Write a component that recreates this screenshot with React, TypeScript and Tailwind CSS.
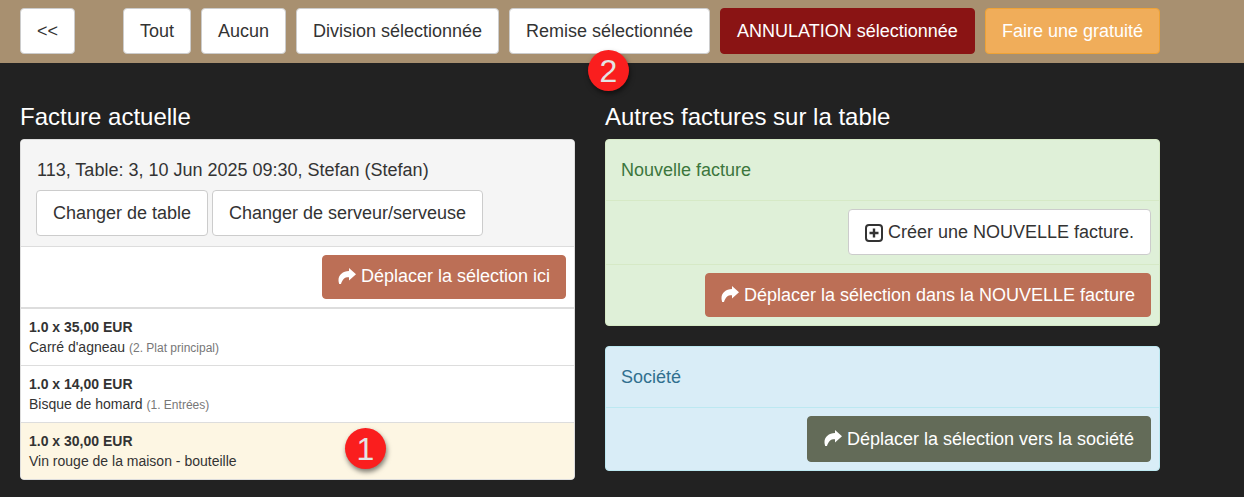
const whiteBtn = 'h-[46px] rounded border border-[#ccc] bg-white text-[18px] text-[#333] flex items-center justify-center';

function ShareIcon() {
  return (
    <svg viewBox="0 0 18 16" className="w-[18px] h-[16px] shrink-0 -mt-0.5" fill="currentColor">
      <path d="M11 0 L18 6.2 L11 12.4 V9.2 C7 9 4.6 10.8 3 16 L1.2 16 C-1.4 9 3.4 3.2 11 3 Z" />
    </svg>
  );
}

function PlusIcon() {
  return (
    <svg viewBox="0 0 18 18" className="w-[18px] h-[18px] shrink-0" fill="none" stroke="currentColor">
      <rect x="1" y="1" width="16" height="16" rx="3" strokeWidth="2" />
      <path d="M9 4.5 V13.5 M4.5 9 H13.5" strokeWidth="2.4" />
    </svg>
  );
}

function ShareButton({ label, className }: { label: string; className: string }) {
  return (
    <button className={`rounded border flex items-center justify-center gap-[5px] text-[18px] text-white ${className}`}>
      <ShareIcon />
      {label}
    </button>
  );
}

function Item({ price, name, course, selected }: { price: string; name: string; course?: string; selected?: boolean }) {
  return (
    <div className={`h-[57px] px-2 pt-2 border-t border-[#ddd] text-[14px] leading-[20px] text-[#333] ${selected ? 'bg-[#fdf6e3]' : 'bg-white'}`}>
      <div className="font-bold">{price}</div>
      <div>
        {name} {course && <span className="text-[12px] text-[#777]">{course}</span>}
      </div>
    </div>
  );
}

function Marker({ n, className }: { n: number; className: string }) {
  return (
    <div className={`absolute w-[41px] h-[41px] rounded-full bg-[#fa1e1e] text-[#e4e4e4] text-[32px] flex items-center justify-center shadow-[1px_3px_5px_rgba(0,0,0,0.5)] ${className}`}>
      {n}
    </div>
  );
}

export default function App() {
  return (
    <div className="relative min-h-[497px] bg-[#222] font-['Liberation_Sans',Arial,sans-serif]">
      <div className="h-[63px] bg-[#a89070] pl-5 pt-2 flex items-start">
        <button className={`${whiteBtn} w-[55px] mr-[48px]`}>&lt;&lt;</button>
        <div className="flex gap-[10px]">
          <button className={`${whiteBtn} w-[68px]`}>Tout</button>
          <button className={`${whiteBtn} w-[85px]`}>Aucun</button>
          <button className={`${whiteBtn} w-[203px]`}>Division sélectionnée</button>
          <button className={`${whiteBtn} w-[201px]`}>Remise sélectionnée</button>
          <button className="h-[46px] w-[255px] rounded border border-[#8a1414] bg-[#8a1414] text-[18px] text-white">ANNULATION sélectionnée</button>
          <button className="h-[46px] w-[175px] rounded border border-[#eea236] bg-[#f0ad5a] text-[18px] text-white">Faire une gratuité</button>
        </div>
      </div>

      <div className="w-[1180px] px-5 pt-[39px] grid grid-cols-2 gap-[30px]">
        <div>
          <h2 className="text-[24px] leading-[30px] text-white mb-[7px]">Facture actuelle</h2>
          <div className="rounded border border-[#ddd] bg-white overflow-hidden">
            <div className="h-[106px] bg-[#f5f5f5] px-[15px] pt-[19px]">
              <div className="pl-px text-[18px] leading-[23px] text-[#333]">113, Table: 3, 10 Jun 2025 09:30, Stefan (Stefan)</div>
              <div className="flex gap-1 mt-2">
                <button className={`${whiteBtn} w-[172px]`}>Changer de table</button>
                <button className={`${whiteBtn} w-[271px]`}>Changer de serveur/serveuse</button>
              </div>
            </div>
            <div className="h-[61px] border-t border-[#ddd] flex justify-end items-center px-2 pb-[1px]">
              <ShareButton label="Déplacer la sélection ici" className="w-[244px] h-[44px] bg-[#bc6f56] border-[#bc6f56]" />
            </div>
            <div className="border-t border-[#ddd]">
              <Item price="1.0 x 35,00 EUR" name="Carré d'agneau" course="(2. Plat principal)" />
              <Item price="1.0 x 14,00 EUR" name="Bisque de homard" course="(1. Entrées)" />
              <Item price="1.0 x 30,00 EUR" name="Vin rouge de la maison - bouteille" selected />
            </div>
          </div>
        </div>

        <div>
          <h2 className="text-[24px] leading-[30px] text-white mb-[7px]">Autres factures sur la table</h2>
          <div className="rounded border border-[#d6e9c6] bg-[#dff0d8]">
            <div className="h-[60px] px-[15px] flex items-center text-[18px] text-[#3c763d]">Nouvelle facture</div>
            <div className="h-[64px] border-t border-[#d6e9c6] flex justify-end items-center px-2 pb-px">
              <button className={`${whiteBtn} w-[303px] gap-[5px] pt-px`}>
                <PlusIcon />
                Créer une NOUVELLE facture.
              </button>
            </div>
            <div className="h-[61px] border-t border-[#d6e9c6] flex justify-end items-center px-2">
              <ShareButton label="Déplacer la sélection dans la NOUVELLE facture" className="w-[446px] h-[44px] bg-[#bc6f56] border-[#bc6f56]" />
            </div>
          </div>

          <div className="mt-5 rounded border border-[#bce8f1] bg-[#d9edf7]">
            <div className="h-[60px] px-[15px] flex items-center text-[18px] text-[#31708f]">Société</div>
            <div className="h-[63px] border-t border-[#bce8f1] flex justify-end items-center px-2">
              <ShareButton label="Déplacer la sélection vers la société" className="w-[344px] h-[46px] bg-[#636b58] border-[#636b58]" />
            </div>
          </div>
        </div>
      </div>

      <Marker n={2} className="left-[588px] top-[50px]" />
      <Marker n={1} className="left-[345px] top-[428px]" />
    </div>
  );
}
